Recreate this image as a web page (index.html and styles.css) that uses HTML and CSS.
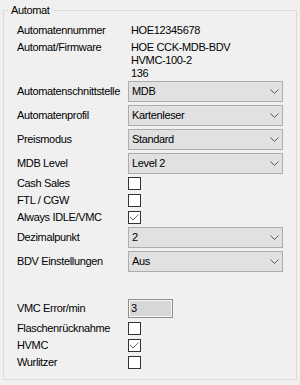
FILE: index.html
```html
<html>
<head>
    <meta charset="utf-8">
    <title>Automat</title>
    <link rel="stylesheet" href="styles.css">
</head>
<body>
    <div class="group">
        <span class="legend">Automat</span>
        <div class="row row-info">
            <span class="label">Automatennummer</span>
            <span class="value">HOE12345678</span>
        </div>
        <div class="row row-multi">
            <span class="label">Automat/Firmware</span>
            <span class="value">HOE CCK-MDB-BDV<br>HVMC-100-2<br>136</span>
        </div>
        <div class="row row-combo">
            <span class="label">Automatenschnittstelle</span>
            <div class="combo"><span>MDB</span><svg class="chevron" width="9" height="5"><polyline points="0.5,0.5 4.5,4.5 8.5,0.5"/></svg></div>
        </div>
        <div class="row row-combo">
            <span class="label">Automatenprofil</span>
            <div class="combo"><span>Kartenleser</span><svg class="chevron" width="9" height="5"><polyline points="0.5,0.5 4.5,4.5 8.5,0.5"/></svg></div>
        </div>
        <div class="row row-combo">
            <span class="label">Preismodus</span>
            <div class="combo"><span>Standard</span><svg class="chevron" width="9" height="5"><polyline points="0.5,0.5 4.5,4.5 8.5,0.5"/></svg></div>
        </div>
        <div class="row row-combo">
            <span class="label">MDB Level</span>
            <div class="combo"><span>Level 2</span><svg class="chevron" width="9" height="5"><polyline points="0.5,0.5 4.5,4.5 8.5,0.5"/></svg></div>
        </div>
        <div class="row row-check">
            <span class="label">Cash Sales</span>
            <svg class="check" width="13" height="13"><rect x="0.5" y="0.5" width="12" height="12"/></svg>
        </div>
        <div class="row row-check">
            <span class="label">FTL / CGW</span>
            <svg class="check" width="13" height="13"><rect x="0.5" y="0.5" width="12" height="12"/></svg>
        </div>
        <div class="row row-check">
            <span class="label">Always IDLE/VMC</span>
            <svg class="check" width="13" height="13"><rect x="0.5" y="0.5" width="12" height="12"/><polyline points="2,6 5,9 10.5,3.5"/></svg>
        </div>
        <div class="row row-combo">
            <span class="label">Dezimalpunkt</span>
            <div class="combo"><span>2</span><svg class="chevron" width="9" height="5"><polyline points="0.5,0.5 4.5,4.5 8.5,0.5"/></svg></div>
        </div>
        <div class="row row-combo">
            <span class="label">BDV Einstellungen</span>
            <div class="combo"><span>Aus</span><svg class="chevron" width="9" height="5"><polyline points="0.5,0.5 4.5,4.5 8.5,0.5"/></svg></div>
        </div>
        <div class="row row-text">
            <span class="label">VMC Error/min</span>
            <div class="textbox">3</div>
        </div>
        <div class="row row-check">
            <span class="label">Flaschenrücknahme</span>
            <svg class="check" width="13" height="13"><rect x="0.5" y="0.5" width="12" height="12"/></svg>
        </div>
        <div class="row row-check">
            <span class="label">HVMC</span>
            <svg class="check" width="13" height="13"><rect x="0.5" y="0.5" width="12" height="12"/><polyline points="2,6 5,9 10.5,3.5"/></svg>
        </div>
        <div class="row row-check">
            <span class="label">Wurlitzer</span>
            <svg class="check" width="13" height="13"><rect x="0.5" y="0.5" width="12" height="12"/></svg>
        </div>
    </div>
</body>
</html>
```

FILE: styles.css
```css
html {
    background-color: #f0f0f0;
}
body {
    margin: 0;
    width: 300px;
    height: 385px;
    padding-top: 10px;
    box-sizing: border-box;
    font-family: 'Liberation Sans', Arial, sans-serif;
    font-size: 11px;
    letter-spacing: -0.35px;
    line-height: 13px;
    color: #000;
}

.group {
    position: relative;
    margin-left: 3px;
    width: 294px;
    height: 370px;
    box-sizing: border-box;
    border: 1px solid #dcdcdc;
    padding: 13px 0 0 13px;
    display: flex;
    flex-direction: column;
    gap: 3px;
}
.legend {
    position: absolute;
    left: 4px;
    top: -7px;
    padding: 0 3px;
    background-color: #f0f0f0;
}

.row {
    display: grid;
    grid-template-columns: 111px 155px;
    align-items: center;
}
.label {
    white-space: nowrap;
}
.value {
    padding-left: 3px;
}
.row-info {
    height: 14px;
    align-items: start;
}
.row-multi {
    height: 37px;
    align-items: start;
}
.row-combo {
    height: 21px;
}
.row-check {
    height: 13px;
}
.row-text {
    height: 19px;
    margin-top: 24px;
}
.row-check + .row-check,
.row-text + .row-check {
    margin-top: 1px;
}

.combo {
    height: 21px;
    box-sizing: border-box;
    border: 1px solid #adadad;
    background-color: #e1e1e1;
    padding: 0 3px 0 3px;
    display: flex;
    align-items: center;
    justify-content: space-between;
}
.chevron polyline {
    fill: none;
    stroke: #5a5a5a;
    stroke-width: 1;
}

.check rect {
    fill: #fff;
    stroke: #333;
    stroke-width: 1;
}
.check polyline {
    fill: none;
    stroke: #666;
    stroke-width: 1;
}

.textbox {
    width: 45px;
    height: 19px;
    box-sizing: border-box;
    border: 1px solid #8f8f8f;
    box-shadow: inset 0 0 0 1px #f6f6f6;
    background-color: #d7d7d7;
    padding-left: 2px;
    line-height: 17px;
}
```
